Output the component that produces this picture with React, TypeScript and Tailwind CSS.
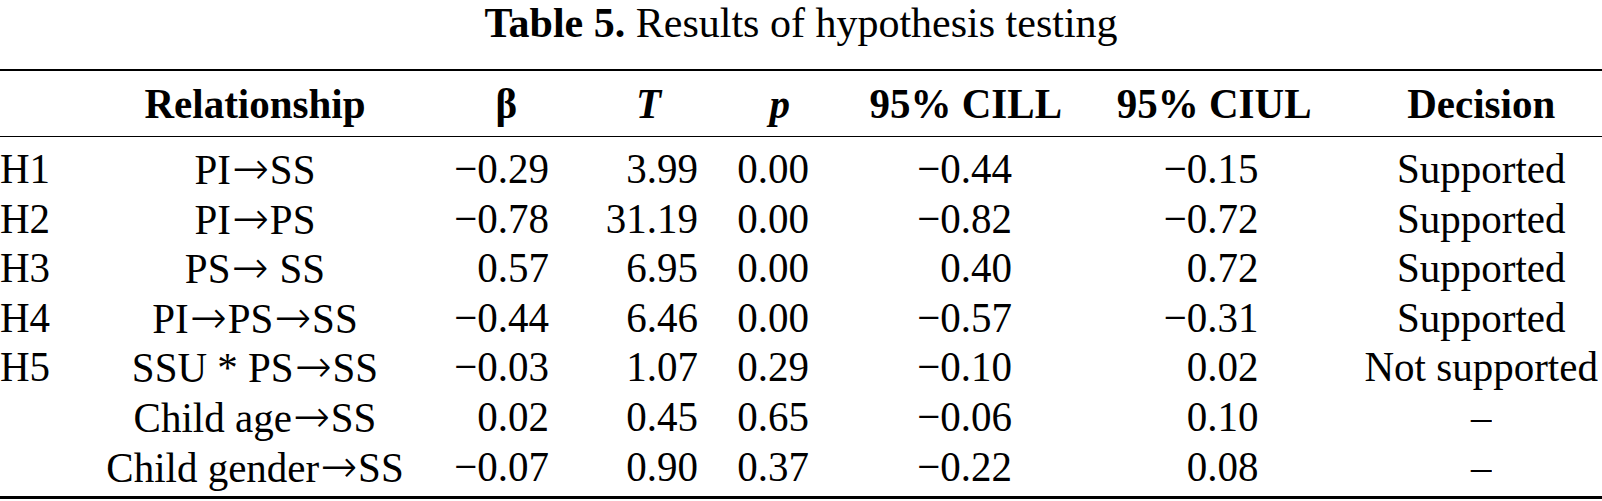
const rows = [
  { h: "H1", rel: ["PI", "SS"], b: "−0.29", t: "3.99", p: "0.00", ll: "−0.44", ul: "−0.15", d: "Supported" },
  { h: "H2", rel: ["PI", "PS"], b: "−0.78", t: "31.19", p: "0.00", ll: "−0.82", ul: "−0.72", d: "Supported" },
  { h: "H3", rel: ["PS", " SS"], b: "0.57", t: "6.95", p: "0.00", ll: "0.40", ul: "0.72", d: "Supported" },
  { h: "H4", rel: ["PI", "PS", "SS"], b: "−0.44", t: "6.46", p: "0.00", ll: "−0.57", ul: "−0.31", d: "Supported" },
  { h: "H5", rel: ["SSU * PS", "SS"], b: "−0.03", t: "1.07", p: "0.29", ll: "−0.10", ul: "0.02", d: "Not supported" },
  { h: "", rel: ["Child age", "SS"], b: "0.02", t: "0.45", p: "0.65", ll: "−0.06", ul: "0.10", d: "–" },
  { h: "", rel: ["Child gender", "SS"], b: "−0.07", t: "0.90", p: "0.37", ll: "−0.22", ul: "0.08", d: "–" },
];

const grid =
  "grid grid-cols-[100px_310px_139px_149px_111px_253px_249.5px_1fr] items-center whitespace-nowrap scale-y-[1.05]";

function Arrow() {
  return <span className="font-['DejaVu_Sans',sans-serif] font-extralight text-[44px] mx-[1px]">→</span>;
}

function Rel({ parts }: { parts: string[] }) {
  return (
    <>
      {parts.map((p, i) => (
        <span key={i}>
          {i > 0 && <Arrow />}
          {p}
        </span>
      ))}
    </>
  );
}

export default function App() {
  return (
    <div className="w-[1602px] min-h-[501px] bg-white text-black font-['Liberation_Serif','Times_New_Roman',serif] text-[41px]">
      <h1 className="text-center text-[42px] leading-[46px]">
        <span className="font-bold">Table 5.</span> Results of hypothesis testing
      </h1>

      <div className="mt-[23px] h-[2px] bg-black" />

      <div className={`${grid} mt-[7.5px] h-[49.6px] leading-[49.6px] font-bold`}>
        <div />
        <div className="text-center">Relationship</div>
        <div className="text-right pr-[32px]">β</div>
        <div className="text-right pr-[37px] italic">T</div>
        <div className="text-right pr-[19px] italic">p</div>
        <div className="text-right">95% CILL</div>
        <div className="text-right">95% CIUL</div>
        <div className="text-center pl-[49px]">Decision</div>
      </div>

      <div className="mt-[7.5px] h-[1.5px] bg-black" />

      <div className="mt-[6px]">
        {rows.map((r, i) => (
          <div key={i} className={`${grid} h-[49.6px] leading-[49.6px]`}>
            <div>{r.h}</div>
            <div className="text-center">
              <Rel parts={r.rel} />
            </div>
            <div className="text-right">{r.b}</div>
            <div className="text-right">{r.t}</div>
            <div className="text-right">{r.p}</div>
            <div className="text-right pr-[50px]">{r.ll}</div>
            <div className="text-right pr-[53px]">{r.ul}</div>
            <div className="text-center pl-[49px]">{r.d}</div>
          </div>
        ))}
      </div>

      <div className="mt-[6px] h-[2.5px] bg-black" />
    </div>
  );
}
